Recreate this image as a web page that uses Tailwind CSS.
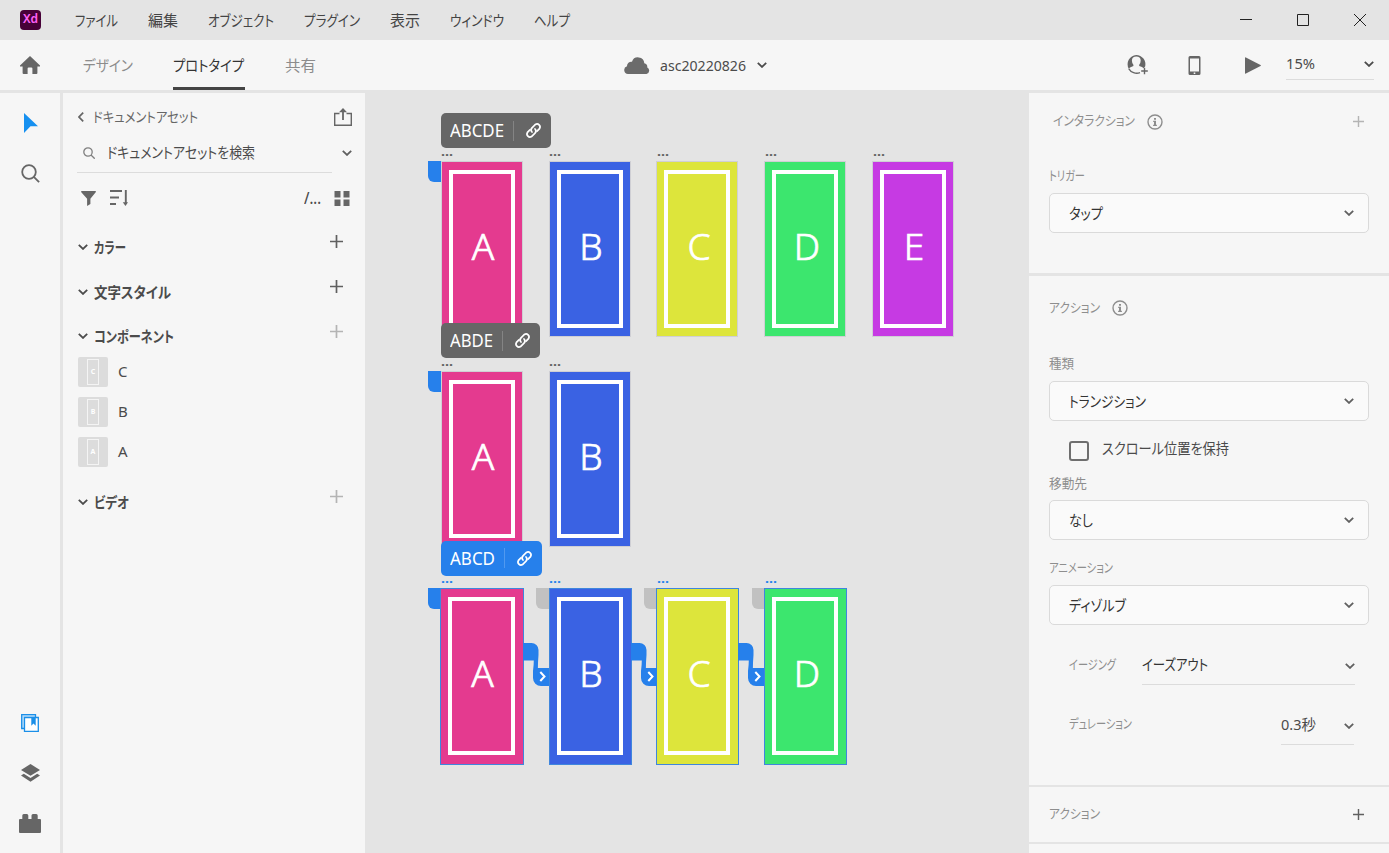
<!DOCTYPE html>
<html lang="ja">
<head>
    <meta charset="UTF-8">
    <meta name="viewport" content="width=device-width, initial-scale=1.0">
    <title>asc20220826 - XD</title>
    <script src="https://cdn.jsdelivr.net/npm/@tailwindcss/browser@4"></script>
</head>
<body class="w-[1389px] h-[853px] overflow-hidden flex flex-col bg-[#e4e4e4] font-['Noto_Sans','Noto_Sans_CJK_JP',sans-serif] text-[15px] leading-5 text-[#4b4b4b]">

    <!-- shared icons -->
    <svg class="hidden">
        <symbol id="chevron" viewBox="0 0 10 6"><path d="M.8.8 5 4.9 9.2.8" fill="none" stroke="currentColor" stroke-width="1.8"/></symbol>
        <symbol id="plus" viewBox="0 0 13 13"><path d="M6.5 0v13M0 6.5h13" fill="none" stroke="currentColor" stroke-width="1.7"/></symbol>
        <symbol id="info" viewBox="0 0 16 16"><circle cx="8" cy="8" r="7" fill="none" stroke="currentColor" stroke-width="1.4"/><path d="M7 4h2v1.7H7zM6.2 6.8H9v4h.9V12H6.1v-1.2H7V8h-.8z" fill="currentColor"/></symbol>
        <symbol id="link" viewBox="0 0 18 18"><g fill="none" stroke="currentColor" stroke-width="1.8" stroke-linecap="round"><path d="M7.4 10.6a3.2 3.2 0 0 1 0-4.4l3.6-3.6a3.2 3.2 0 0 1 4.4 4.4l-2.6 2.6"/><path d="M10.6 7.4a3.2 3.2 0 0 1 0 4.4L7 15.4A3.2 3.2 0 0 1 2.6 11l2.6-2.6"/></g></symbol>
        <symbol id="wire" viewBox="0 0 27 43"><path d="M0 0h8.500a7 7 0 0 1 7 7v5q-.6 7-.6 13H26v18h-8a8 8 0 0 1-8-8v-7q.8-6 .8-10.500H0z" fill="#2680eb"/><path d="m17.3 29 4.200 4.500-4.200 4.500" fill="none" stroke="#fff" stroke-width="2"/></symbol>
    </svg>

    <!-- title bar -->
    <header class="h-10 shrink-0 flex items-center pl-5 pr-[23px] text-[#444]">
        <div class="w-[21px] h-5 rounded-[4px] bg-[#470137] text-[#ff61f6] text-[12px] font-semibold leading-[18px] text-center">Xd</div>
        <nav class="ml-[34px] flex gap-[30px]">
            <span data-w="43">ファイル</span>
            <span data-w="30">編集</span>
            <span data-w="66">オブジェクト</span>
            <span data-w="56">プラグイン</span>
            <span data-w="30">表示</span>
            <span data-w="54">ウィンドウ</span>
            <span data-w="36">ヘルプ</span>
        </nav>
        <div class="ml-auto flex items-center gap-[45px] text-[#222]">
            <svg class="w-3 h-3" viewBox="0 0 12 12"><path d="M0 5.5h12" stroke="currentColor"/></svg>
            <svg class="w-3 h-3" viewBox="0 0 12 12"><path d="M.5.5h11v11H.5z" fill="none" stroke="currentColor"/></svg>
            <svg class="w-3 h-3" viewBox="0 0 12 12"><path d="m0 0 12 12M12 0 0 12" stroke="currentColor"/></svg>
        </div>
    </header>

    <!-- toolbar -->
    <div class="h-[50px] shrink-0 flex bg-[#f6f6f6]">
        <svg class="w-5 h-[18px] ml-5 mt-4 text-[#666]" viewBox="0 0 20 18"><path d="M10 0 20 9.6v.9h-2.6V17q0 1-1 1h-4v-5.5q0-1-1-1H8.6q-1 0-1 1V18h-4q-1 0-1-1v-6.5H0v-.9z" fill="currentColor"/></svg>
        <div class="ml-[43px] flex gap-10 leading-[50px] text-[#8c8c8c]">
            <span data-w="50">デザイン</span>
            <div class="w-[72px] h-[50px] border-b-[3px] border-[#444] text-[#333]"><span data-w="71">プロトタイプ</span></div>
            <span data-w="31">共有</span>
        </div>
        <div class="ml-[308px] flex items-center h-[50px]">
            <svg class="w-[26px] h-[17px] text-[#6b6b6b]" viewBox="0 0 26 17"><path d="M4 17a4 4 0 0 1-1-7.8 4.3 4.3 0 0 1 5-4.4 6.3 6.3 0 0 1 12.3 1.5 4 4 0 0 1 3 4.2A3.5 3.5 0 0 1 22.500 17z" fill="currentColor"/></svg>
            <span class="ml-[10px]" data-w="86">asc20220826</span>
            <svg class="w-[10px] h-[6px] ml-[11px]"><use href="#chevron"/></svg>
        </div>
        <div class="ml-auto mr-[15px] flex h-[50px] text-[#666]">
            <svg class="w-[21px] h-5 mt-[15px]" viewBox="0 0 21 20"><path d="M13 17.600A9.200 9.200 0 0 1 1.700 13.600" fill="none" stroke="currentColor" stroke-width="1.300"/><path d="M9.200 0a9.200 9.200 0 0 1 8.900 11.500l-1.500 1.700q-1-1.100-4.400-2.100v-1.400q1.500-1.700 1.500-4.200c0-2.500-1.700-4-4.400-4S4.900 3 4.900 5.500q0 2.500 1.500 4.200v1.400q-3.400 1-4.700 2.500A9.200 9.200 0 0 1 9.200 0z" fill="currentColor"/><path d="M17.500 12.700v6.500M14.200 16h6.600" stroke="currentColor" stroke-width="1.400"/></svg>
            <svg class="w-[13px] h-[19px] ml-10 mt-4" viewBox="0 0 13 19"><path fill-rule="evenodd" d="M2 0h9q1.500 0 1.500 1.500v16Q12.500 19 11 19H2Q.5 19 .5 17.500v-16Q.5 0 2 0zm0 2.500v13h9v-13zm3.700 14v1.400h1.600v-1.400z" fill="currentColor"/></svg>
            <svg class="w-4 h-[17px] ml-11 mt-[17px]" viewBox="0 0 16 17"><path d="M0 .8Q0 0 .9.400L15.500 8q.8.500 0 1L.9 16.600Q0 17 0 16.200z" fill="currentColor"/></svg>
            <div class="ml-[25px] w-[88px] h-10 flex items-center justify-between border-b border-[#dcdcdc] pt-[8px] text-[#4b4b4b]">
                <span class="mb-[2px]" data-w="29">15%</span>
                <svg class="w-[10px] h-[6px]"><use href="#chevron"/></svg>
            </div>
        </div>
    </div>

    <main class="grow flex gap-[3px] pt-[3px]">
        <!-- tool strip -->
        <aside class="w-[60px] flex flex-col items-center bg-[#f6f6f6] text-[#666]">
            <svg class="w-[14px] h-5 mt-5 ml-[2px]" viewBox="0 0 14 20"><path d="M0 0 14 13.200H6.500L0 20z" fill="#1690f0"/></svg>
            <svg class="w-[19px] h-[19px] mt-[31px]" viewBox="0 0 19 19"><g fill="none" stroke="currentColor" stroke-width="1.8"><circle cx="8" cy="8" r="6.800"/><path d="m12.800 12.800 5.300 5.300"/></g></svg>
            <svg class="w-[18px] h-[18px] mt-auto" viewBox="0 0 18 18"><g fill="none" stroke="#1b8fe8" stroke-width="1.300"><path d="M3 14.500H.700V.700h13.800V3" fill="#b8ddfa"/><path d="M3.500 3.500h13.800v13.800H3.500z" fill="#fff"/></g><path d="M10.300 3.500h4.400v8.200l-2.200-2.200-2.200 2.200z" fill="#1b8fe8"/></svg>
            <svg class="w-[19px] h-[18px] mt-8" viewBox="0 0 19 18"><path d="m9.500 0 9.500 5.900-9.500 5.900L0 5.900zM2.800 9.700l6.700 4.200 6.700-4.200L19 11.400 9.500 17.700 0 11.400z" fill="currentColor"/></svg>
            <svg class="w-[22px] h-[19px] mt-[32px] mb-5" viewBox="0 0 22 19"><path d="M1 5h2.300V1.500q0-1.500 1.500-1.500h3q1.500 0 1.500 1.500V5h3.200V1.500Q12.500 0 14 0h3.200q1.500 0 1.500 1.500V5H21q1 0 1 1v12q0 1-1 1H1q-1 0-1-1V6q0-1 1-1z" fill="currentColor"/></svg>
        </aside>

        <!-- document assets -->
        <section class="w-[302px] pl-[15px] pr-[13px] bg-[#f6f6f6]">
            <div class="h-[49px] pb-px flex items-center text-[#666]">
                <svg class="w-[6px] h-[10px]" viewBox="0 0 6 10"><path d="M5.200.6 1 5l4.200 4.400" fill="none" stroke="currentColor" stroke-width="1.700"/></svg>
                <span class="ml-[9px] mb-px text-[14px]" data-w="105">ドキュメントアセット</span>
                <svg class="w-[18px] h-[18px] ml-auto" viewBox="0 0 18 18"><path d="M5.500 5.500H.700v11.800h16.600V5.500h-4.800" fill="none" stroke="currentColor" stroke-width="1.400"/><path d="M9 12V3" stroke="currentColor" stroke-width="1.800"/><path d="m9 0 4 4.300H5z" fill="currentColor"/></svg>
            </div>
            <div class="h-[31px] -ml-px flex justify-between">
                <div class="w-[255px] border-b border-[#dcdcdc] flex items-center pb-[9px] pl-[6px]">
                    <svg class="w-3 h-3" viewBox="0 0 12 12"><g fill="none" stroke="#808080" stroke-width="1.300"><circle cx="5" cy="5" r="4.200"/><path d="m8 8 3.700 3.700"/></g></svg>
                    <span class="ml-[12px] mb-[2px]" data-w="148">ドキュメントアセットを検索</span>
                </div>
                <svg class="w-[10px] h-[6px] mt-2 text-[#606060]"><use href="#chevron"/></svg>
            </div>
            <div class="h-[50px] pl-[3px] pr-[2px] flex items-center text-[#666]">
                <svg class="w-[15px] h-[15px]" viewBox="0 0 15 15"><path d="M.600 0h13.800q.900.300.300 1.200L9.400 7.800V13l-3.300 2V7.800L.300 1.200Q-.200.300.600 0z" fill="currentColor"/></svg>
                <svg class="w-[18px] h-4 ml-[14px]" viewBox="0 0 18 16"><path d="M0 1h12M0 7.500h9M0 14h6M15.800 0v14" stroke="currentColor" stroke-width="1.900"/><path d="M12.800 12.300h5.200L15.500 16z" fill="currentColor"/></svg>
                <div class="ml-auto mr-[14px] w-4 text-[17px] font-medium text-[#4b4b4b]"><span data-w="17">/...</span></div>
                <svg class="w-4 h-[15px]" viewBox="0 0 16 15"><path d="M.500 0h6v6.500h-6zM9.500 0h6v6.500h-6zM.500 8.500h6V15h-6zM9.500 8.500h6V15h-6z" fill="currentColor"/></svg>
            </div>

            <div class="pt-[1px]">
                <div class="h-[45px] flex items-center font-semibold">
                    <svg class="w-[10px] h-[6px]"><use href="#chevron"/></svg>
                    <span class="ml-[6px]" data-w="32">カラー</span>
                    <svg class="w-[13px] h-[13px] ml-auto mr-[9px] mb-[10px] text-[#606060]"><use href="#plus"/></svg>
                </div>
                <div class="h-[45px] flex items-center font-semibold">
                    <svg class="w-[10px] h-[6px]"><use href="#chevron"/></svg>
                    <span class="ml-[6px]" data-w="77">文字スタイル</span>
                    <svg class="w-[13px] h-[13px] ml-auto mr-[9px] mb-[10px] text-[#606060]"><use href="#plus"/></svg>
                </div>
                <div class="h-[43px] flex items-center font-semibold">
                    <svg class="w-[10px] h-[6px]"><use href="#chevron"/></svg>
                    <span class="ml-[6px]" data-w="80">コンポーネント</span>
                    <svg class="w-[13px] h-[13px] ml-auto mr-[9px] mb-[8px] text-[#b4b4b4]"><use href="#plus"/></svg>
                </div>
                <div class="flex flex-col gap-[10px]">
                    <div class="flex items-center gap-[10px]">
                        <div class="w-[30px] h-[30px] rounded-[2px] bg-[#dcdcdc] flex justify-center py-[2px]"><div class="w-3 border border-[#f4f4f4] text-white text-[7px] font-bold leading-6 text-center">C</div></div>
                        <span class="mb-[2px]">C</span>
                    </div>
                    <div class="flex items-center gap-[10px]">
                        <div class="w-[30px] h-[30px] rounded-[2px] bg-[#dcdcdc] flex justify-center py-[2px]"><div class="w-3 border border-[#f4f4f4] text-white text-[7px] font-bold leading-6 text-center">B</div></div>
                        <span class="mb-[2px]">B</span>
                    </div>
                    <div class="flex items-center gap-[10px]">
                        <div class="w-[30px] h-[30px] rounded-[2px] bg-[#dcdcdc] flex justify-center py-[2px]"><div class="w-3 border border-[#f4f4f4] text-white text-[7px] font-bold leading-6 text-center">A</div></div>
                        <span class="mb-[2px]">A</span>
                    </div>
                </div>
                <div class="h-[45px] mt-[12px] flex items-center font-semibold">
                    <svg class="w-[10px] h-[6px]"><use href="#chevron"/></svg>
                    <span class="ml-[6px]" data-w="35">ビデオ</span>
                    <svg class="w-[13px] h-[13px] ml-auto mr-[9px] mb-[10px] text-[#b4b4b4]"><use href="#plus"/></svg>
                </div>
            </div>
        </section>

        <!-- canvas, filled from the flow list below -->
        <section id="canvas" class="relative grow -ml-[3px]"></section>

        <!-- property inspector -->
        <aside class="w-[360px] -ml-[3px] flex flex-col gap-[3px] text-[#8e8e8e] text-[13px]">
            <div class="h-[180px] px-5 bg-[#f6f6f6]">
                <div class="h-[58px] flex items-center pl-1">
                    <span class="mb-[4px]" data-w="82">インタラクション</span>
                    <svg class="w-4 h-4 ml-[11.5px]"><use href="#info"/></svg>
                    <svg class="w-[11px] h-[11px] ml-auto mr-[5px] mb-px text-[#b4b4b4]"><use href="#plus"/></svg>
                </div>
                <div class="h-[42px] pt-[6px] flex items-center"><span data-w="36">トリガー</span></div>
                <div class="h-10 rounded-[5px] border border-[#dadada] bg-[#fafafa] flex items-center justify-between pl-[19px] pr-[14px] text-[15px] text-[#333]">
                    <span data-w="34">タップ</span>
                    <svg class="w-[10px] h-[6px] text-[#606060]"><use href="#chevron"/></svg>
                </div>
            </div>

            <div class="h-[509px] px-5 bg-[#f6f6f6]">
                <div class="h-16 flex items-center">
                    <span class="mb-[3px]" data-w="51">アクション</span>
                    <svg class="w-4 h-4 ml-[11.5px]"><use href="#info"/></svg>
                </div>
                <div class="h-[41px] pt-[5px] flex items-center"><span data-w="25">種類</span></div>
                <div class="h-10 rounded-[5px] border border-[#dadada] bg-[#fafafa] flex items-center justify-between pl-[19px] pr-[14px] text-[15px] text-[#333]">
                    <span data-w="77">トランジション</span>
                    <svg class="w-[10px] h-[6px] text-[#606060]"><use href="#chevron"/></svg>
                </div>
                <div class="h-[46px] pt-[18px] pl-5 flex items-start text-[15px] text-[#4b4b4b]">
                    <div class="w-5 h-5 mt-[2px] rounded-[3px] border-2 border-[#6e6e6e]"></div>
                    <span class="ml-[13px] -mt-px" data-w="127">スクロール位置を保持</span>
                </div>
                <div class="h-[33px] pb-px flex items-center"><span data-w="38">移動先</span></div>
                <div class="h-10 rounded-[5px] border border-[#dadada] bg-[#fafafa] flex items-center justify-between pl-[19px] pr-[14px] text-[15px] text-[#333]">
                    <span data-w="24">なし</span>
                    <svg class="w-[10px] h-[6px] text-[#606060]"><use href="#chevron"/></svg>
                </div>
                <div class="h-[45px] pt-[9px] flex items-center"><span data-w="64">アニメーション</span></div>
                <div class="h-10 rounded-[5px] border border-[#dadada] bg-[#fafafa] flex items-center justify-between pl-[19px] pr-[14px] text-[15px] text-[#333]">
                    <span data-w="57">ディゾルブ</span>
                    <svg class="w-[10px] h-[6px] text-[#606060]"><use href="#chevron"/></svg>
                </div>
                <div class="mt-5 h-10 pl-5 pr-[14px] flex items-center justify-between">
                    <span class="mb-[3px]" data-w="47">イージング</span>
                    <div class="w-[213px] h-10 flex items-center justify-between border-b border-[#dcdcdc] text-[15px] text-[#333]">
                        <span class="mb-px" data-w="66">イーズアウト</span>
                        <svg class="w-[10px] h-[6px] mt-[3px] text-[#606060]"><use href="#chevron"/></svg>
                    </div>
                </div>
                <div class="mt-5 h-10 pl-5 pr-[15px] flex items-center justify-between">
                    <span class="mb-[4px]" data-w="63">デュレーション</span>
                    <div class="w-[73px] h-10 flex items-center justify-between border-b border-[#dcdcdc] text-[15px] text-[#4b4b4b]">
                        <span class="mb-[2px]" data-w="35">0.3秒</span>
                        <svg class="w-[10px] h-[6px] mt-[3px] text-[#606060]"><use href="#chevron"/></svg>
                    </div>
                </div>
            </div>

            <div class="h-[55px] -mt-px px-5 bg-[#f6f6f6] flex items-center justify-between">
                <span class="mb-[3px]" data-w="51">アクション</span>
                <svg class="w-[11px] h-[11px] mr-[5px] mb-px text-[#606060]"><use href="#plus"/></svg>
            </div>
            <div class="grow -mt-px bg-[#f6f6f6]"></div>
        </aside>
    </main>

    <script>
        const colors = { A: '#e43a8f', B: '#3a62e3', C: '#dde53b', D: '#3ce66e', E: '#c63ae3' };

        const flows = [
            { name: 'ABCDE', boards: 'ABCDE', top: 68, tag: 20, tagWidth: 109.5, nameWidth: 54 },
            { name: 'ABDE', boards: 'AB', top: 278, tag: 230, tagWidth: 98.5, nameWidth: 43 },
            { name: 'ABCD', boards: 'ABCD', top: 495, tag: 447.5, tagWidth: 101, nameWidth: 45, selected: true },
        ];

        let html = '';
        flows.forEach(flow => {
            const sel = flow.selected;
            [...flow.boards].forEach((name, i) => {
                const x = Math.round(76 + i * 107.7);
                html += `
                <div class="absolute text-[13px] font-bold leading-3 ${sel ? 'text-[#2680eb]' : 'text-[#606060]'}" style="left:${76 + i * 107.9}px;top:${flow.top - 16}px"><span data-w="12">...</span></div>`;
                if (i === 0 || sel) {
                    html += `
                    <div class="absolute w-[13px] h-[21px] rounded-bl-[6px] ${i === 0 ? 'bg-[#2680eb]' : 'bg-[#c1c1c1]'}" style="left:${63 + i * 108}px;top:${flow.top}px"></div>`;
                }
                html += `
                <div class="absolute flex items-stretch border ${sel ? 'h-[177px] border-[#3f86dd] pl-[7px] pr-[8px] pt-2 pb-[9px]' : 'h-[176px] border-[#cfcfd4] px-[7px] py-2'}" style="left:${sel && i === 0 ? x - 1 : x}px;top:${flow.top}px;width:${sel ? (i === 0 ? 84 : 83) : 82}px;background:${colors[name]}">
                    <div class="grow border-4 border-white ${'CD'.includes(name) ? 'pl-1' : 'pl-[2px]'} text-white text-[37px] font-light [-webkit-text-stroke:0.7px_white] leading-[144px] text-center">${name}</div>
                </div>`;
            });
            if (sel) {
                for (let i = 0; i < flow.boards.length - 1; i++) {
                    html += `
                    <svg class="absolute w-[27px] h-[43px]" style="left:${158 + i * 107.7}px;top:${flow.top + 55}px"><use href="#wire"/></svg>`;
                }
            }
        });
        flows.forEach(flow => {
            html += `
            <div class="absolute h-[35px] rounded-[5px] flex items-center pl-[9px] pr-2 text-white text-[18px] ${flow.selected ? 'bg-[#2680eb]' : 'bg-[#666]'}" style="left:76.4px;top:${flow.tag}px;width:${flow.tagWidth}px">
                <span class="mb-px" data-w="${flow.nameWidth}">${flow.name}</span>
                <div class="w-px h-5 ml-auto mr-[11px] bg-white/20"></div>
                <svg class="w-[17px] h-[17px] mr-px"><use href="#link"/></svg>
            </div>`;
        });
        document.getElementById('canvas').innerHTML = html;

        // fit every label to its UI width once the styles are in
        window.addEventListener('load', () => {
            document.querySelectorAll('[data-w]').forEach(el => {
                el.classList.add('inline-block', 'whitespace-nowrap', 'origin-left', 'shrink-0');
                el.style.fontFeatureSettings = '"palt"';
                const natural = el.getBoundingClientRect().width;
                el.style.width = natural + 'px';
                el.style.marginRight = (el.dataset.w - natural) + 'px';
                el.style.transform = `scaleX(${el.dataset.w / natural})`;
            });
        });
    </script>
</body>
</html>
